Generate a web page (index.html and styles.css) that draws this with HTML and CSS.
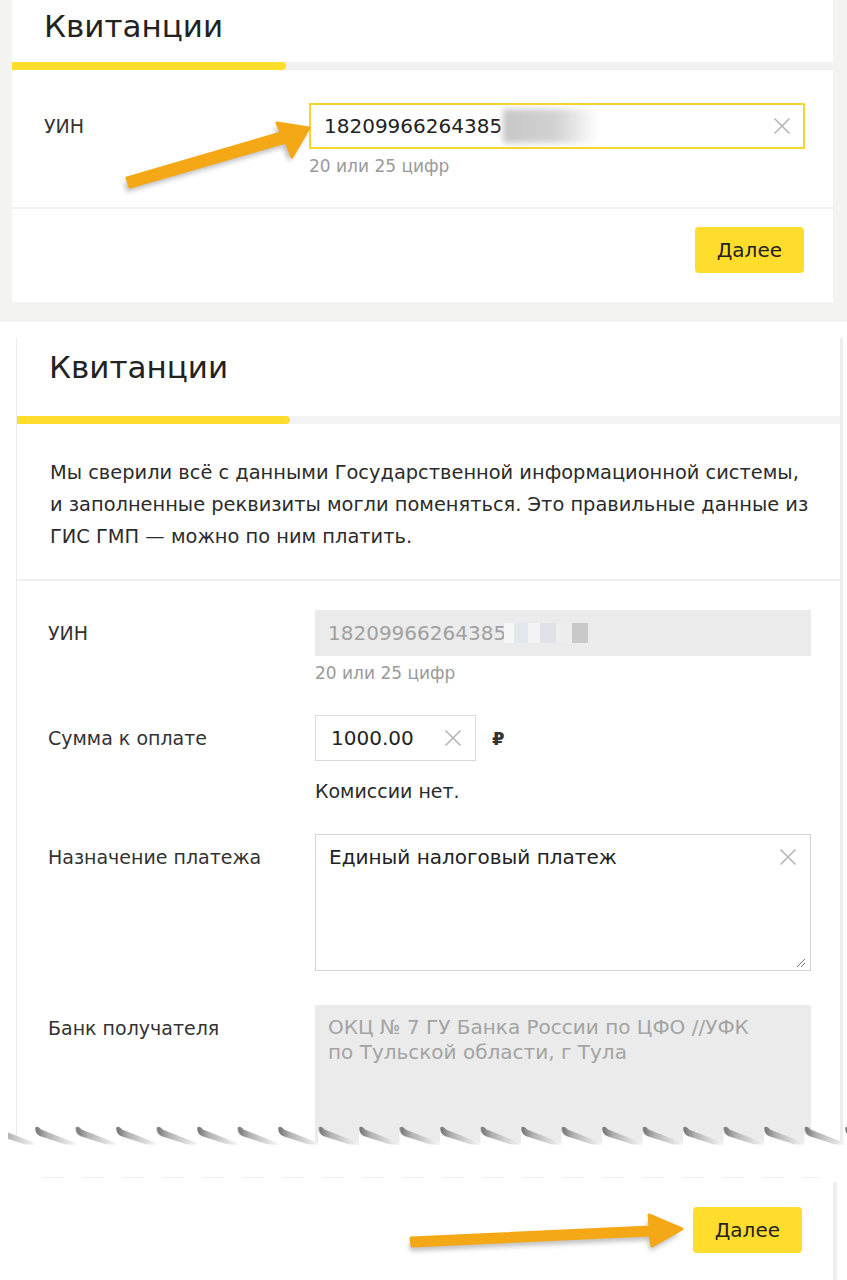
FILE: index.html
```html
<!DOCTYPE html>
<html lang="ru">
<head>
<meta charset="utf-8">
<title>Квитанции</title>
<link rel="stylesheet" href="styles.css">
</head>
<body>
<main class="page">

  <section class="shot shot-top">
    <div class="card card-top">
      <header class="card-head head-top"><h1 class="title">Квитанции</h1></header>
      <div class="progress"><div class="progress-fill"></div></div>
      <div class="card-body body-top">
        <div class="field field-top">
          <div class="label">УИН</div>
          <div class="control">
            <div class="input input-focus">
              <span class="value">18209966264385</span><span class="smudge"></span>
              <svg class="clear" width="18" height="18" viewBox="0 0 18 18"><path d="M1.5 1.5L16.5 16.5M16.5 1.5L1.5 16.5"/></svg>
            </div>
            <div class="hint">20 или 25 цифр</div>
          </div>
        </div>
      </div>
      <footer class="card-foot foot-top"><button class="btn">Далее</button></footer>
    </div>
  </section>

  <section class="shot shot-mid">
    <div class="card card-mid">
      <div class="cut">
        <header class="card-head head-mid"><h1 class="title">Квитанции</h1></header>
        <div class="progress progress-mid"><div class="progress-fill fill-mid"></div></div>
        <p class="notice">Мы сверили всё с данными Государственной информационной системы,<br>и заполненные реквизиты могли поменяться. Это правильные данные из<br>ГИС ГМП — можно по ним платить.</p>
        <div class="form">
          <div class="field">
            <div class="label">УИН</div>
            <div class="control">
              <div class="input input-disabled">
                <span class="value">18209966264385</span><span class="pixels"><i class="px p1"></i><i class="px p2"></i><i class="px p3"></i><i class="px p4"></i><i class="px p5"></i><i class="px p6"></i></span>
              </div>
              <div class="hint">20 или 25 цифр</div>
            </div>
          </div>
          <div class="field">
            <div class="label">Сумма к оплате</div>
            <div class="control">
              <div class="amount-line">
                <div class="input input-amount">
                  <span class="value">1000.00</span>
                  <svg class="clear" width="18" height="18" viewBox="0 0 18 18"><path d="M1.5 1.5L16.5 16.5M16.5 1.5L1.5 16.5"/></svg>
                </div>
                <span class="currency">₽</span>
              </div>
              <div class="note">Комиссии нет.</div>
            </div>
          </div>
          <div class="field">
            <div class="label">Назначение платежа</div>
            <div class="control">
              <div class="textarea">
                <div class="textarea-top">
                  <span class="value">Единый налоговый платеж</span>
                  <svg class="clear" width="18" height="18" viewBox="0 0 18 18"><path d="M1.5 1.5L16.5 16.5M16.5 1.5L1.5 16.5"/></svg>
                </div>
                <svg class="grip" width="10" height="10" viewBox="0 0 10 10"><path d="M9 1L1 9M9 5L5 9"/></svg>
              </div>
            </div>
          </div>
          <div class="field field-bank">
            <div class="label">Банк получателя</div>
            <div class="control">
              <div class="readonly-box">ОКЦ № 7 ГУ Банка России по ЦФО //УФК<br>по Тульской области, г Тула</div>
            </div>
          </div>
        </div>
      </div>
    </div>
    <svg class="tear" width="847" height="24" viewBox="0 0 847 24">
      <defs>
        <linearGradient id="toothShade" x1="0" y1="0" x2="1" y2="0">
          <stop offset="0" stop-color="#727272"/>
          <stop offset="0.3" stop-color="#b2b2b2"/>
          <stop offset="1" stop-color="#f6f6f6"/>
        </linearGradient>
        <pattern id="teeth" patternUnits="userSpaceOnUse" x="-5.5" y="0" width="40.5" height="24">
          <path d="M0 2L40.5 17L40.5 24L0 24Z" fill="#ffffff"/>
          <path d="M0.4 1.4C1.8 0.2 4 0.6 6 3.6L40.5 17L40.5 19L30 18.2L6 10.6C2 9.2 -0.2 5.6 0.4 1.4Z" fill="url(#toothShade)"/>
        </pattern>
      </defs>
      <rect x="0" y="0" width="847" height="24" fill="#ffffff"/>
      <rect x="16" y="0" width="1" height="24" fill="#ececec"/>
      <rect x="315" y="0" width="496" height="24" fill="#ebebeb"/>
      <rect x="840" y="0" width="3" height="24" fill="#eeeeee"/>
      <rect x="0" y="0" width="847" height="24" fill="url(#teeth)"/>
      <rect x="0" y="0" width="8" height="24" fill="#ffffff"/>
    </svg>
  </section>

  <section class="shot shot-bottom">
    <div class="dashes"></div>
    <footer class="card-foot foot-bottom"><button class="btn">Далее</button></footer>
  </section>

  <svg class="arrows" width="847" height="1280" viewBox="0 0 847 1280">
    <defs>
      <filter id="soft" x="-20%" y="-60%" width="140%" height="220%"><feGaussianBlur stdDeviation="2.5"/></filter>
    </defs>
    <path class="arrow-shadow" transform="translate(-3 5)" filter="url(#soft)" d="M127 178L281 133L277 123L309 128L292 157L286 142L130 187Z"/>
    <path class="arrow-body" d="M127 178L281 133L277 123L309 128L292 157L286 142L130 187Z"/>
    <path class="arrow-shadow" transform="translate(-2 5)" filter="url(#soft)" d="M411 1238L650 1227L649 1215L682 1229L652 1246L650 1235L412 1246Z"/>
    <path class="arrow-body" d="M411 1238L650 1227L649 1215L682 1229L652 1246L650 1235L412 1246Z"/>
  </svg>

</main>
</body>
</html>
```

FILE: styles.css
```css
* { box-sizing: border-box; }

html, body {
  margin: 0;
  padding: 0;
}

body {
  font-family: "DejaVu Sans", "Noto Sans", sans-serif;
  color: #333333;
  background: #ffffff;
}

.page {
  position: relative;
  width: 847px;
  height: 1280px;
  overflow: hidden;
}

/* ---------- generic card parts ---------- */

.card { background: #ffffff; }

.title {
  margin: 0;
  padding-left: 32px;
  font-size: 31px;
  line-height: 36px;
  font-weight: 400;
  color: #222222;
}

.progress {
  height: 8px;
  background: #f1f1f1;
}

.progress-mid { background: #f4f4f4; }

.progress-fill {
  width: 274px;
  height: 100%;
  background: #ffdd2d;
  border-radius: 0 4px 4px 0;
}

.fill-mid { width: 273px; }

.field {
  display: grid;
  grid-template-columns: 267px 496px;
}

.field-top { grid-template-columns: 265px 496px; }

.label {
  font-size: 19px;
  line-height: 46px;
  color: #333333;
}

.control {
  display: flex;
  flex-direction: column;
}

.input {
  height: 46px;
  display: flex;
  align-items: center;
  padding: 0 13px;
  font-size: 20px;
  color: #222222;
  background: #ffffff;
  border: 1px solid #d9d9d9;
  white-space: nowrap;
}

.input-focus {
  border: 2px solid #f7d531;
  padding: 0 12px 0 13px;
}

.input-focus .clear { margin-left: auto; }

.input-disabled {
  border: none;
  background: #ebebeb;
  color: #a0a0a0;
}

.clear {
  flex: none;
  fill: none;
  stroke: #b4b4b4;
  stroke-width: 1.5;
}

.smudge {
  display: inline-block;
  width: 96px;
  height: 34px;
  margin-left: 1px;
  background: linear-gradient(90deg, #c6c6c6 0%, #d2d2d2 55%, rgba(225, 225, 225, 0) 100%);
  filter: blur(3px);
}

.pixels {
  display: inline-flex;
  height: 20px;
  margin-left: -2px;
}

.px { display: block; height: 20px; }
.p1 { width: 10px; background: #f6f6f6; }
.p2 { width: 14px; background: #e2e7ee; }
.p3 { width: 12px; background: #f3f3f3; }
.p4 { width: 16px; background: #dfe3e9; }
.p5 { width: 16px; background: #ededed; }
.p6 { width: 16px; background: #c9c9c9; }

.hint {
  margin-top: 6px;
  font-size: 17px;
  line-height: 22px;
  color: #9a9a9a;
}

.btn {
  height: 46px;
  padding: 0 22px;
  border: none;
  border-radius: 4px;
  background: #ffdd2d;
  font-family: inherit;
  font-size: 20px;
  color: #222222;
}

/* ---------- top screenshot ---------- */

.shot-top {
  background: #f3f3f2;
  padding: 0 14px 20px 12px;
}

.head-top {
  height: 62px;
  padding-top: 8px;
}

.body-top {
  padding: 33px 28px 30px 32px;
  border-bottom: 2px solid #f0f0f0;
}

.card-foot {
  display: flex;
  justify-content: flex-end;
}

.foot-top {
  padding: 18px 29px 29px 0;
}

/* ---------- middle screenshot ---------- */

.shot-mid {
  background: #ffffff;
  padding-top: 16px;
}

.card-mid {
  margin: 0 4px 0 16px;
  border-left: 1px solid #ececec;
  border-right: 3px solid #eeeeee;
}

.cut {
  height: 788px;
  overflow: hidden;
}

.head-mid {
  height: 78px;
  padding-top: 11px;
}

.notice {
  margin: 0;
  padding: 33px 10px 26px 33px;
  font-size: 19.4px;
  line-height: 32px;
  color: #2b2b2b;
  border-bottom: 2px solid #f0f0f0;
  white-space: nowrap;
}

.form {
  display: flex;
  flex-direction: column;
  gap: 31px;
  padding: 29px 29px 0 31px;
}

.amount-line {
  display: flex;
  align-items: center;
}

.input-amount {
  width: 161px;
  padding: 0 13px 0 15px;
  justify-content: space-between;
}

.currency {
  margin-left: 16px;
  font-size: 18px;
  font-weight: 700;
  color: #333333;
}

.note {
  margin-top: 18px;
  font-size: 19px;
  line-height: 24px;
  color: #2b2b2b;
}

.textarea {
  height: 137px;
  display: flex;
  flex-direction: column;
  padding: 10px 13px 2px 13px;
  border: 1px solid #d4d4d4;
  font-size: 20px;
  color: #222222;
}

.textarea-top {
  display: flex;
  align-items: center;
  justify-content: space-between;
  line-height: 24px;
}

.grip {
  margin-top: auto;
  margin-right: -9px;
  align-self: flex-end;
  fill: none;
  stroke: #777777;
  stroke-width: 1;
}

.field-bank { margin-top: 3px; }

.readonly-box {
  height: 160px;
  padding: 10px 13px;
  background: #ebebeb;
  font-size: 20px;
  line-height: 25px;
  color: #a3a3a3;
  white-space: nowrap;
}

.tear { display: block; }

/* ---------- bottom screenshot ---------- */

.shot-bottom {
  height: 130px;
  background: #ffffff;
  padding-top: 27px;
}

.dashes {
  height: 1px;
  margin: 0 28px 0 43px;
  background: repeating-linear-gradient(90deg, #eeeeee 0 20px, rgba(255, 255, 255, 0) 20px 40px);
}

.foot-bottom {
  height: 98px;
  margin: 4px 10px 0 0;
  padding: 25px 31px 0 0;
  border-right: 4px solid #efefef;
  align-items: flex-start;
}

/* ---------- arrows overlay ---------- */

.arrows {
  position: absolute;
  top: 0;
  left: 0;
  pointer-events: none;
}

.arrow-body {
  fill: #f5a816;
  stroke: #f5a816;
  stroke-width: 3;
  stroke-linejoin: round;
}

.arrow-shadow {
  fill: #6f6f6f;
  opacity: 0.45;
}
```
